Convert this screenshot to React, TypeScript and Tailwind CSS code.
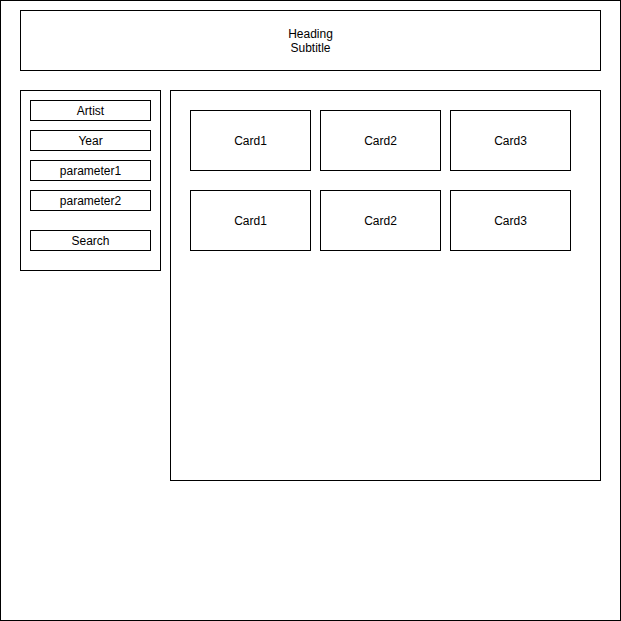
import React from "react";

const FILTERS = ["Artist", "Year", "parameter1", "parameter2"];
const ROWS = [
  ["Card1", "Card2", "Card3"],
  ["Card1", "Card2", "Card3"],
];

export default function App() {
  return (
    <div
      className="w-[621px] h-[621px] border border-black bg-white pl-[19px] pt-[9px] text-[12px] leading-[14px] text-black"
      style={{ fontFamily: '"Liberation Sans", Arial, sans-serif' }}
    >
      <div className="w-[581px] h-[61px] border border-black flex flex-col items-center justify-center">
        <div>Heading</div>
        <div>Subtitle</div>
      </div>

      <div className="mt-[19px] flex gap-[9px] items-start">
        <div className="w-[141px] h-[181px] border border-black pl-[9px] pt-[9px]">
          <div className="flex flex-col gap-[9px]">
            {FILTERS.map((f) => (
              <div key={f} className="w-[121px] h-[21px] border border-black flex items-center justify-center">
                {f}
              </div>
            ))}
          </div>
          <button className="mt-[19px] w-[121px] h-[21px] border border-black flex items-center justify-center">
            Search
          </button>
        </div>

        <div className="w-[431px] h-[391px] border border-black pl-[19px] pt-[19px] flex flex-col gap-[19px]">
          {ROWS.map((row, i) => (
            <div key={i} className="flex gap-[9px]">
              {row.map((c) => (
                <div key={c} className="w-[121px] h-[61px] border border-black flex items-center justify-center">
                  {c}
                </div>
              ))}
            </div>
          ))}
        </div>
      </div>
    </div>
  );
}
